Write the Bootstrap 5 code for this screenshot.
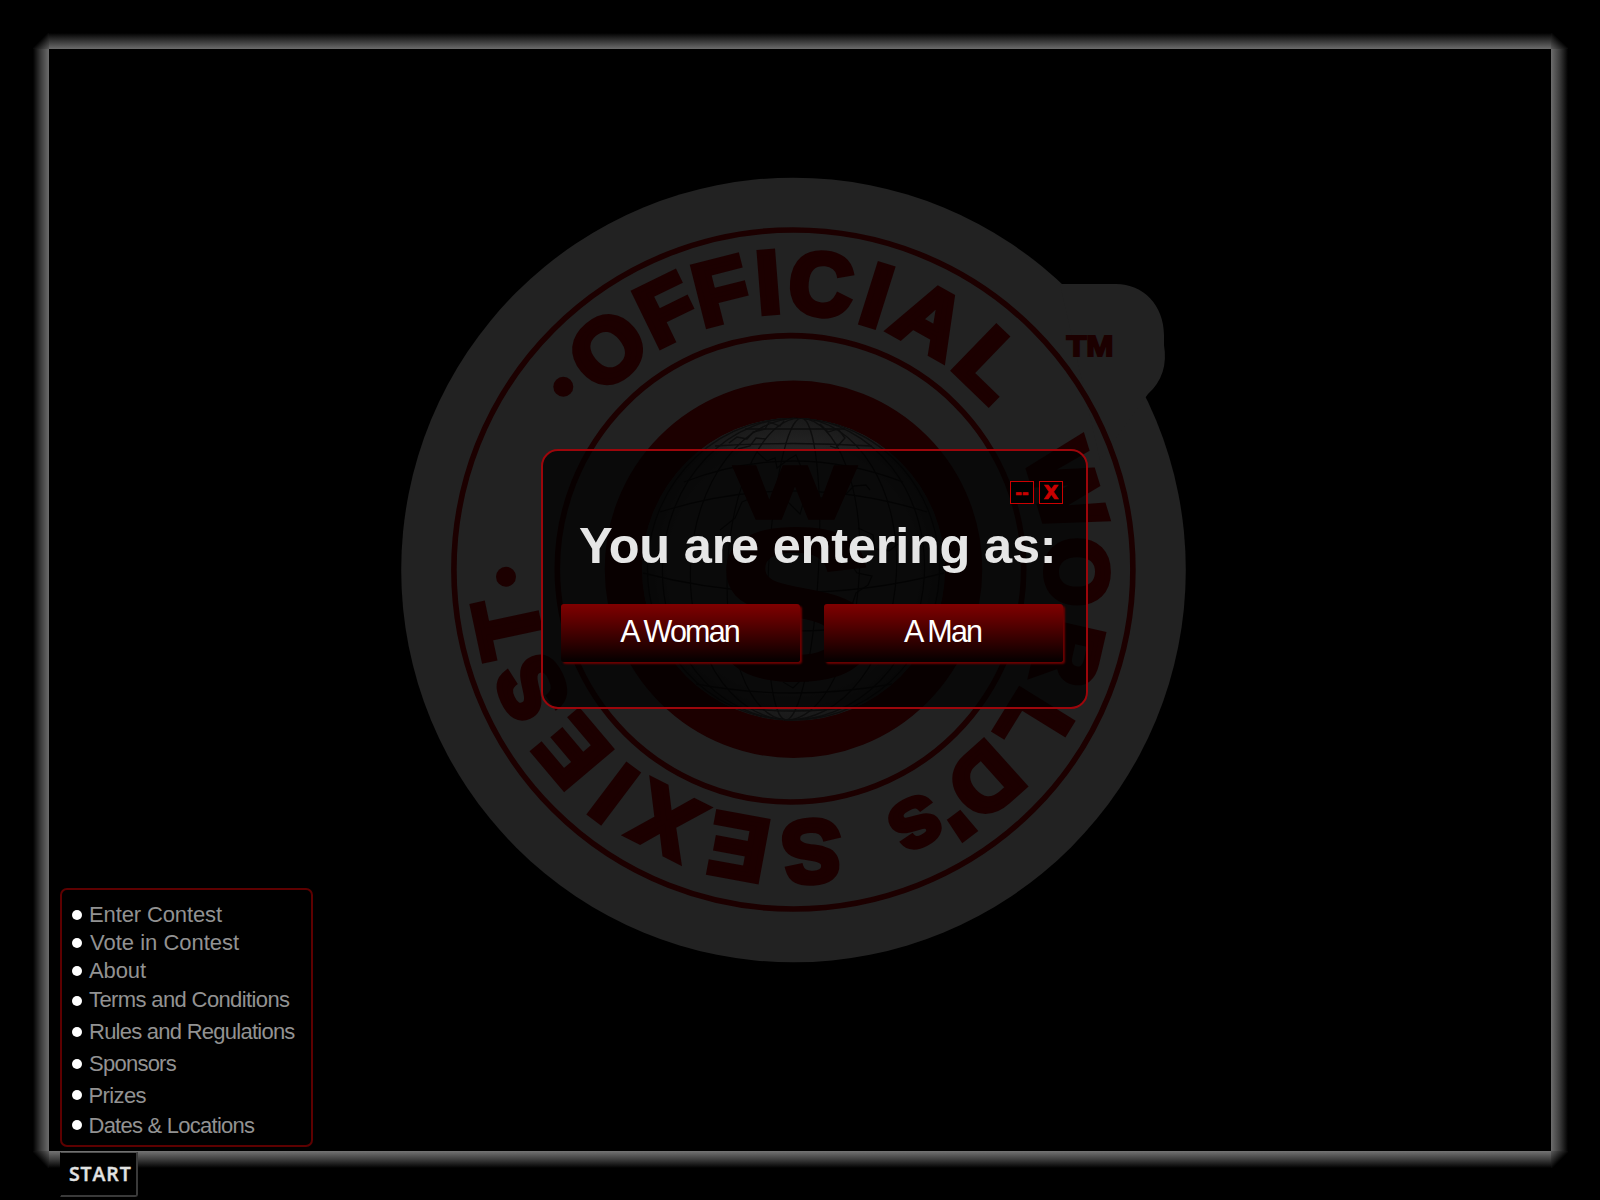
<!DOCTYPE html>
<html lang="en">
<head>
<meta charset="utf-8">
<title>World's Sexiest - Official</title>
<meta name="viewport" content="width=device-width, initial-scale=1">
<link href="https://cdn.jsdelivr.net/npm/bootstrap@5.3.0/dist/css/bootstrap.min.css" rel="stylesheet">
<style>
  body { background: #000; font-family: "Liberation Sans", Arial, sans-serif; }
  .desktop { width: 1600px; height: 1200px; padding: 0 0 3px 60px; }
  .wallpaper { inset: 0; }
  .glow-frame { inset: 33px 32px 32px 33px; display: grid; grid-template: 16px 1fr 17px / 16px 1fr 17px; pointer-events: none; }
  .glow-t { background: linear-gradient(to top, #6c6c6c, #3c3c3c 45%, #000); }
  .glow-b { background: linear-gradient(to bottom, #747474, #3c3c3c 50%, #000); }
  .glow-l { background: linear-gradient(to left, #6c6c6c, #3c3c3c 50%, #000); }
  .glow-r { background: linear-gradient(to right, #6c6c6c, #3c3c3c 50%, #000); }
  .glow-tl { background: linear-gradient(to top left, #5c5c5c, #000 55%); }
  .glow-tr { background: linear-gradient(to top right, #5c5c5c, #000 55%); }
  .glow-bl { background: linear-gradient(to bottom left, #5c5c5c, #000 55%); }
  .glow-br { background: linear-gradient(to bottom right, #5c5c5c, #000 55%); }

  .entry-window { left: 541px; top: 449px; width: 547px; height: 260px; padding: 30px 23px 0 18px;
    border: 2px solid #9c060b; border-radius: 17px; background: rgba(0,0,0,.7); }
  .win-btn { width: 24px; height: 23px; background: #000; border: 1px solid #c00; color: #c80000;
    font: bold 19px/21px "DejaVu Sans", sans-serif; -webkit-text-stroke: .7px #c80000; }
  .win-min { font-size: 16px; letter-spacing: .2px; line-height: 17px; }
  .entry-title { margin: 12px 0 0 18px; font-size: 50.5px; line-height: 60px; font-weight: 700; color: #e6e6e6; letter-spacing: -.22px; }
  .choice { width: 239px; height: 58px; border: 0; border-radius: 3px; color: #fff; font-size: 30.5px; line-height: 50px; letter-spacing: -1.85px; text-indent: -2px; padding: 0 0 4px;
    background: linear-gradient(#800000, #5c0000 30%, #080000 97%); box-shadow: 2px 2px 2px #6c0000; }
  .choices { margin-top: 28px; gap: 24px; }

  .start-menu { width: 253px; height: 259px; border: 2px solid #5d0000; border-radius: 7px; padding: 10px 0 0 10px; }
  .start-menu a { color: #929292; font-size: 22px; line-height: 30px; text-decoration: none; white-space: nowrap; }
  .start-menu li { height: 28px; gap: 7px; }
  .start-menu .wide { gap: 8px; }
  .start-menu .snug { gap: 6.5px; }
  .start-menu i { width: 10px; height: 10px; border-radius: 50%; background: #fff; margin-top: 10px; flex: none; }
  .start-menu .i1 { margin-top: 9px; }
  .start-menu .i2 { margin-top: 11px; }
  .start-menu .h29 { height: 28.7px; }
  .start-menu .h32 { height: 32px; }
  .start-menu .h30 { height: 30px; }
  .start-menu .tight { letter-spacing: -.62px; }
  .start-menu .tighter { letter-spacing: -.75px; }
  .start-menu .slight { letter-spacing: -.12px; }
  .start-btn { width: 78px; height: 45px; margin-top: 5px; background: #000; border: 1px solid; border-color: #505050 #3a3a3a #3a3a3a #000;
    border-right-width: 2px; border-bottom-width: 2px; border-radius: 0 0 3px 0; color: #e2e2e2; font: 600 19.5px/41px "Open Sans", sans-serif; letter-spacing: .9px; -webkit-text-stroke: .4px #e2e2e2; padding: 0 0 2px 8px; }
</style>
<script src="https://cdn.jsdelivr.net/npm/bootstrap@5.3.0/dist/js/bootstrap.bundle.min.js"></script>
</head>
<body class="overflow-hidden">
<div class="desktop position-relative d-flex flex-column justify-content-end overflow-hidden">

  <svg class="wallpaper position-absolute" width="1600" height="1200" viewBox="0 0 1600 1200" font-family="Liberation Sans, Arial, sans-serif" font-weight="700">
    <defs>
      <radialGradient id="globe" gradientUnits="userSpaceOnUse" cx="793.5" cy="569" r="152">
        <stop offset=".8" stop-color="#242424"/><stop offset="1" stop-color="#181818"/>
      </radialGradient>
      <clipPath id="globeClip"><circle cx="793.5" cy="569.3" r="151.5"/></clipPath>
    </defs>
    <g fill="#222">
      <circle cx="793.5" cy="570" r="392.3"/>
      <path d="M1060 284H1116C1143 284 1164 305 1164 335V345Q1169 375 1148 394L1100 460Z"/>
    </g>
    <g fill="none" stroke="#1c0000">
      <circle cx="793.4" cy="569.5" r="339.5" stroke-width="5.6"/>
      <circle cx="790.5" cy="568.8" r="233.2" stroke-width="5.6"/>
      <circle cx="793.5" cy="569.2" r="170" stroke-width="37.5"/>
    </g>
    <circle cx="793.5" cy="569.3" r="151.5" fill="url(#globe)"/>
    <g clip-path="url(#globeClip)" fill="none" stroke="#0d0d0d" stroke-width="1.3">
      <g transform="rotate(3 793.5 569)">
        <ellipse cx="793.5" cy="569" rx="25" ry="151"/><ellipse cx="793.5" cy="569" rx="66" ry="151"/>
        <ellipse cx="793.5" cy="569" rx="103" ry="151"/><ellipse cx="793.5" cy="569" rx="131" ry="151"/>
        <ellipse cx="793.5" cy="569" rx="146" ry="151"/>
      </g>
      <path d="M745 429H845M715 446Q793 441 872 446M684 482Q793 440 903 482M660 512Q793 470 927 512M643 573Q793 612 944 573M650 612Q793 650 938 612M664 648Q793 674 922 648M696 684Q793 702 892 684M730 706Q793 716 858 706"/>
      <path d="M729 443l8-6 10 2 6-7 12-3 4-7 11 4 4-5M738 449l12-3 6-8 10 1M820 424l8 8 10-3 7 9-9 10-6-2M757 452l10 9 8-3 2 10 12-9 7-4 5 12-8 10 5 8-10 4M769 500l9 6 10-4 12 12 3-10 9 4 4-9 10-2M838 480l8 14 8-8 12-1 4 5M720 530l15-12 7-16 12-5M858 528l15 7 2 14 14 2 9-7M848 560l9 13 15 3-4 9-12 8-4 12M783 682l10 6 8-8 8 1"/>
    </g>
    <g fill="#1c0000" stroke="#1c0000" stroke-width="6" text-anchor="middle" font-size="88">
      <g stroke="none"><circle cx="563.3" cy="386.7" r="10"/><circle cx="506" cy="576.7" r="10"/></g>
      <text transform="translate(607.7 349.7) rotate(-40) scale(1.03 1)" y="30.3">O</text>
      <text transform="translate(666.5 310) rotate(-26)" y="30.3">F</text>
      <text transform="translate(721 291) rotate(-14.2)" y="30.3">F</text>
      <text transform="translate(768.3 282.2) rotate(-4.5)" y="30.3">I</text>
      <text transform="translate(821 284.3) rotate(5.6)" y="30.3">C</text>
      <text transform="translate(876.7 295.5) rotate(17.5)" y="30.3">I</text>
      <text transform="translate(930.3 319.3) rotate(29) scale(1.04 1)" y="30.3">A</text>
      <text transform="translate(991.3 364.3) rotate(44) scale(1.05 1)" y="30.3">L</text>
      <text transform="translate(1065.7 486.3) rotate(73) scale(1.03 1)" y="30.3">W</text>
      <text transform="translate(1077.8 572) rotate(90)" y="30.3">O</text>
      <text transform="translate(1067.7 652.7) rotate(103)" y="30.3">R</text>
      <text transform="translate(1034.2 724.7) rotate(121.7) scale(1.05 1)" y="30.3">L</text>
      <text transform="translate(985 781) rotate(138)" y="30.3">D</text>
      <text transform="translate(950.5 810.5) rotate(143) scale(1.12 1)" y="30.3" stroke-width="6">'</text>
      <text transform="translate(915.3 822.5) rotate(152) scale(1.02 .98)" y="23.2" stroke-width="5">s</text>
      <text transform="translate(811.5 851.5) rotate(176.5)" y="30.3">S</text>
      <text transform="translate(738.5 847) rotate(190.5)" y="30.3">E</text>
      <text transform="translate(666.2 821) rotate(206.8) scale(1.06 1)" y="30.3">X</text>
      <text transform="translate(613.8 793.5) rotate(217)" y="30.3">I</text>
      <text transform="translate(572.3 750.7) rotate(229.8)" y="30.3">E</text>
      <text transform="translate(532 688.3) rotate(245)" y="30.3">S</text>
      <text transform="translate(508.3 627) rotate(258) scale(1.06 1)" y="30.3">T</text>
      <text transform="translate(1090 356) scale(1.09 1)" font-size="30" stroke-width="1.8">TM</text>
      <text transform="translate(795 517.5) scale(1.69 1)" font-size="75" stroke-width="3.4">W</text>
      <text transform="translate(795.5 677.5) scale(1.15 1)" font-size="214" stroke-width="4">S</text>
    </g>
  </svg>

  <div class="glow-frame position-absolute">
    <div class="glow-tl"></div><div class="glow-t"></div><div class="glow-tr"></div>
    <div class="glow-l"></div><div></div><div class="glow-r"></div>
    <div class="glow-bl"></div><div class="glow-b"></div><div class="glow-br"></div>
  </div>

  <section class="entry-window position-absolute">
    <div class="d-flex justify-content-end" style="gap:5px">
      <button class="win-btn win-min p-0">--</button>
      <button class="win-btn p-0">X</button>
    </div>
    <h1 class="entry-title text-nowrap">You are entering as:</h1>
    <div class="choices d-flex">
      <button class="choice">A Woman</button>
      <button class="choice">A Man</button>
    </div>
  </section>

  <ul class="start-menu list-unstyled position-relative mb-0">
    <li class="d-flex"><i></i><a href="#" class="slight">Enter Contest</a></li>
    <li class="d-flex wide"><i></i><a href="#">Vote in Contest</a></li>
    <li class="d-flex h29"><i></i><a href="#" class="slight">About</a></li>
    <li class="d-flex h32"><i class="i2"></i><a href="#" class="tight">Terms and Conditions</a></li>
    <li class="d-flex h32"><i></i><a href="#" class="tighter">Rules and Regulations</a></li>
    <li class="d-flex h32"><i></i><a href="#" class="tighter">Sponsors</a></li>
    <li class="d-flex h30 snug"><i class="i1"></i><a href="#" class="tight">Prizes</a></li>
    <li class="d-flex snug"><i class="i1"></i><a href="#" class="tighter">Dates &amp; Locations</a></li>
  </ul>
  <button class="start-btn position-relative text-start">START</button>
</div>
</body>
</html>
